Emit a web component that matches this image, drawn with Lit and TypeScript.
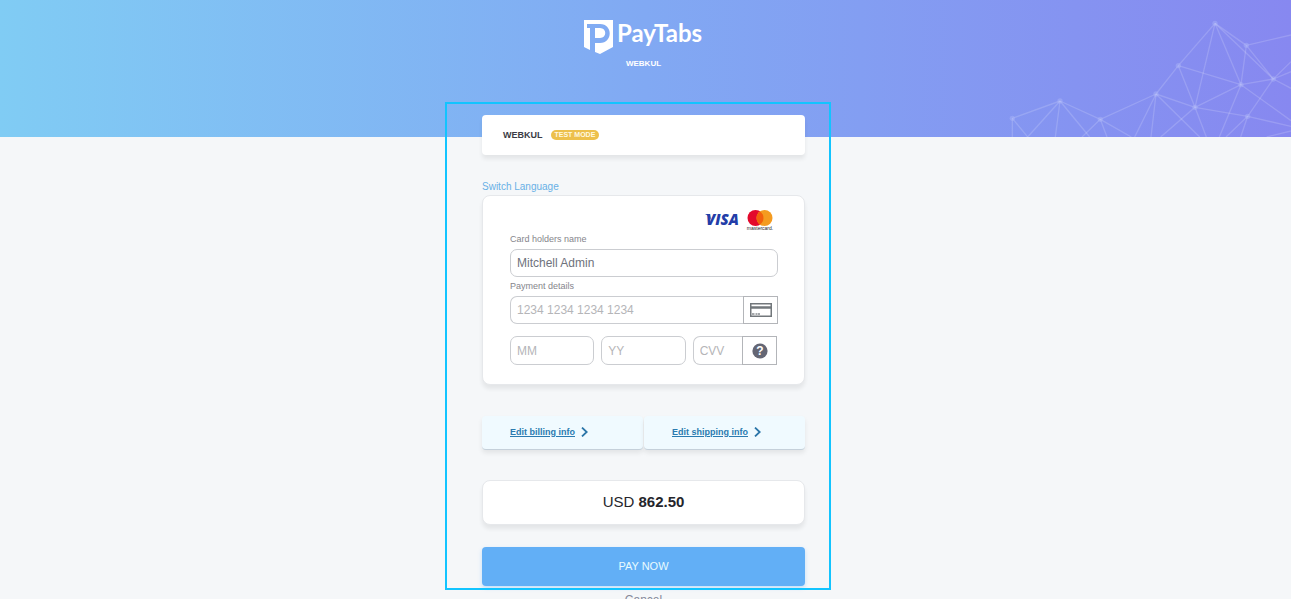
import { LitElement, html, css, svg } from "lit";
import { customElement, property } from "lit/decorators.js";

type Point = [number, number];

const NODES: Point[] = [
  [67, 355], [210, 303], [331, 358], [498, 282], [565, 197], [675, 70],
  [769, 136], [850, 237], [753, 254], [615, 322], [773, 349],
];

const EDGES: [Point, Point][] = [
  [[67, 355], [210, 303]], [[67, 355], [67, 411]], [[67, 355], [113, 411]],
  [[210, 303], [331, 358]], [[210, 303], [113, 411]], [[210, 303], [196, 411]],
  [[210, 303], [299, 411]], [[331, 358], [276, 411]], [[331, 358], [351, 411]],
  [[331, 358], [424, 411]], [[331, 358], [498, 282]], [[498, 282], [434, 411]],
  [[498, 282], [483, 411]], [[498, 282], [629, 411]], [[498, 282], [615, 322]],
  [[498, 282], [565, 197]], [[565, 197], [675, 70]], [[565, 197], [615, 322]],
  [[565, 197], [753, 254]], [[675, 70], [615, 322]], [[675, 70], [753, 254]],
  [[675, 70], [769, 136]], [[675, 70], [850, 237]], [[769, 136], [850, 237]],
  [[769, 136], [753, 254]], [[769, 136], [903, 105]], [[753, 254], [850, 237]],
  [[753, 254], [615, 322]], [[753, 254], [903, 362]], [[753, 254], [688, 411]],
  [[615, 322], [512, 411]], [[615, 322], [773, 349]], [[615, 322], [649, 411]],
  [[850, 237], [903, 185]], [[850, 237], [903, 215]], [[850, 237], [903, 265]],
  [[850, 237], [773, 349]], [[773, 349], [903, 379]], [[773, 349], [708, 411]],
  [[773, 349], [752, 411]], [[830, 411], [903, 393]],
];

@customElement("pay-banner")
export class PayBanner extends LitElement {
  static styles = css`
    :host {
      display: flex;
      justify-content: flex-end;
      height: 137px;
      overflow: hidden;
      background: linear-gradient(90deg, #80ccf4, #81a9f3 50%, #8788f0);
    }
    .mesh {
      width: 301px;
      height: 137px;
      flex: none;
    }
  `;
  render() {
    return html`<svg class="mesh" viewBox="0 0 903 411" aria-hidden="true">
      <g stroke="#fff" stroke-opacity=".16" stroke-width="4">
        ${EDGES.map(([a, b]) => svg`<line x1=${a[0]} y1=${a[1]} x2=${b[0]} y2=${b[1]}></line>`)}
      </g>
      <g fill="#b0b8fa" fill-opacity=".4">
        ${NODES.map(([x, y]) => svg`<circle cx=${x} cy=${y} r="8"></circle>`)}
      </g>
    </svg>`;
  }
}

@customElement("edit-link")
export class EditLink extends LitElement {
  @property() label = "";
  static styles = css`
    :host {
      display: flex;
      align-items: center;
      gap: 6px;
      height: 34px;
      padding: 0 0 2px 28px;
      box-sizing: border-box;
      background: #f0faff;
      border-bottom: 1px solid #c5d0da;
      border-radius: 4px;
      box-shadow: 0 3px 5px rgba(0, 0, 0, 0.08);
    }
    .link {
      font-size: 9px;
      font-weight: 700;
      line-height: 12px;
      color: #2b7bb0;
    }
    .chevron {
      width: 7px;
      height: 10px;
    }
  `;
  render() {
    return html`<a class="link" href="#">${this.label}</a>
      <svg class="chevron" viewBox="0 0 7 10" fill="none" stroke="#2b75a8" stroke-width="1.8" aria-hidden="true">
        <path d="M1 .6 5.700 5 1 9.400"></path>
      </svg>`;
  }
}

@customElement("app-root")
export class AppRoot extends LitElement {
  static styles = css`
    :host {
      display: grid;
      grid-template: auto / minmax(0, 1fr);
      align-items: start;
      height: 100vh;
      overflow-y: auto;
      scrollbar-width: none;
      background: #f5f7f9;
      font-family: "Liberation Sans", Arial, sans-serif;
    }
    * {
      box-sizing: border-box;
    }
    .banner,
    .content {
      grid-area: 1 / 1;
    }
    .content {
      z-index: 1;
      display: flex;
      flex-direction: column;
      align-items: center;
      padding: 19px 20px 19px 16px;
    }
    .logo {
      width: 120px;
      height: 36px;
    }
    .logo-text {
      font-family: Lato, sans-serif;
      font-size: 24px;
      font-weight: 700;
    }
    .merchant {
      margin: 3px 0 46px;
      font-size: 8px;
      line-height: 11px;
      font-weight: 700;
      color: #fff;
    }
    .checkout {
      position: relative;
      width: 100%;
      max-width: 323px;
      display: flex;
      flex-direction: column;
    }
    .focus-frame {
      position: absolute;
      inset: -13px -26px -4px -37px;
      border: 2px solid #12c4ff;
      pointer-events: none;
    }
    .panel {
      background: #fff;
      border: 1px solid #e6e8eb;
      border-radius: 8px;
      box-shadow: 0 4px 4px rgba(0, 0, 0, 0.07);
    }
    .shop {
      display: flex;
      align-items: center;
      gap: 8px;
      height: 40px;
      padding: 0 21px;
      border: 0;
      border-radius: 4px;
      font-size: 9px;
      font-weight: 700;
      color: #3b3b45;
    }
    .badge {
      padding: 0 4px;
      border-radius: 5px;
      background: #edc04c;
      color: #fff9e0;
      font-size: 7px;
      line-height: 10px;
    }
    .language {
      align-self: flex-start;
      margin-top: 26px;
      font-size: 10px;
      line-height: 12px;
      color: #68b0e6;
      text-decoration: none;
    }
    .card {
      margin-top: 2px;
      padding: 12px 26px 19px 27px;
      display: flex;
      flex-direction: column;
    }
    .brands {
      display: flex;
      justify-content: flex-end;
      gap: 7px;
      height: 25px;
      padding-right: 4px;
    }
    .visa {
      width: 34px;
      height: 25px;
    }
    .visa-text {
      font-family: "Open Sans", sans-serif;
      font-size: 15px;
      font-weight: 800;
      font-style: italic;
    }
    .mastercard {
      width: 28px;
      height: 25px;
    }
    .mastercard-text {
      font-family: "Liberation Sans", sans-serif;
      font-size: 5px;
    }
    .label {
      font-size: 9px;
      line-height: 12px;
      color: #85858c;
    }
    .label.first {
      margin-bottom: 4px;
    }
    .label.second {
      margin: 3px 0 4px;
    }
    .field {
      width: 100%;
      min-width: 0;
      height: 28px;
      padding: 0 6px;
      border: 1px solid #cbcdd1;
      border-radius: 7px;
      background: #fff;
      font-family: inherit;
      font-size: 12px;
      color: #6e727c;
      outline: none;
    }
    .field::placeholder {
      color: #b5b5b8;
      opacity: 1;
    }
    .group {
      display: flex;
    }
    .group .field {
      border-right: 0;
      border-radius: 7px 0 0 7px;
    }
    .addon {
      flex: none;
      display: flex;
      align-items: center;
      justify-content: center;
      width: 35px;
      height: 28px;
      padding: 0;
      border: 1px solid #b3b5b9;
      background: #fff;
    }
    .card-icon {
      width: 22px;
      height: 14px;
    }
    .help-icon {
      width: 16px;
      height: 16px;
    }
    .help-text {
      font-family: "Liberation Sans", sans-serif;
      font-size: 12px;
      font-weight: 700;
    }
    .expiry {
      display: grid;
      grid-template-columns: repeat(3, minmax(0, 1fr));
      gap: 7px;
      margin: 12px 1px 0 0;
    }
    .expiry .field,
    .expiry .addon {
      height: 29px;
    }
    .links {
      display: grid;
      grid-template-columns: repeat(2, minmax(0, 1fr));
      gap: 1px;
      margin-top: 31px;
    }
    .amount {
      margin: 30px 0 22px;
      padding: 11px 12px 13px;
      font-size: 15px;
      line-height: 19px;
      text-align: center;
      color: #25252b;
    }
    .pay {
      height: 39px;
      padding: 0 0 2px;
      border: 0;
      border-radius: 4px;
      background: #62aff6;
      box-shadow: 0 2px 4px rgba(98, 175, 246, 0.35);
      font-family: inherit;
      font-size: 11px;
      color: #e8fbff;
    }
    .cancel {
      margin-top: 7px;
      font-size: 12px;
      line-height: 14px;
      color: #85899a;
      text-decoration: none;
    }
  `;

  render() {
    return html`
      <pay-banner class="banner"></pay-banner>
      <main class="content">
        <svg class="logo" viewBox="0 0 120 36" role="img" aria-label="PayTabs">
          <path fill="#fff" fill-rule="evenodd" d="M0 1H29V28L16 35 11 33V24H16C29 24 29 5 16 5H3V9H6V31L0 28ZM11 9H16C23 9 23 19 16 19H11Z"></path>
          <text class="logo-text" x="33" y="23" fill="#fff">PayTabs</text>
        </svg>
        <div class="merchant">WEBKUL</div>
        <form class="checkout" @submit=${(e: Event) => e.preventDefault()}>
          <div class="panel shop">WEBKUL <span class="badge">TEST MODE</span></div>
          <a class="language" href="#">Switch Language</a>
          <section class="panel card">
            <div class="brands">
              <svg class="visa" viewBox="0 0 34 25" role="img" aria-label="Visa">
                <path fill="#233da8" d="M0 6H5L6 12Q4 7.500 0 6Z"></path>
                <text class="visa-text" x="1" y="17" fill="#233da8">VISA</text>
              </svg>
              <svg class="mastercard" viewBox="0 0 28 25" role="img" aria-label="Mastercard">
                <circle cx="9.500" cy="10" r="8" fill="#e3092c"></circle>
                <circle cx="18.500" cy="10" r="8" fill="#f49b20"></circle>
                <path d="M14 3.400A8 8 0 0 1 14 16.600 8 8 0 0 1 14 3.400Z" fill="#f2600d"></path>
                <text class="mastercard-text" x="14" y="22" text-anchor="middle" fill="#26262b">mastercard.</text>
              </svg>
            </div>
            <label class="label first" for="holder">Card holders name</label>
            <input class="field" id="holder" .value=${"Mitchell Admin"} />
            <label class="label second" for="number">Payment details</label>
            <div class="group">
              <input class="field" id="number" placeholder="1234 1234 1234 1234" />
              <span class="addon">
                <svg class="card-icon" viewBox="0 0 22 14" aria-hidden="true">
                  <rect x=".75" y=".75" width="20.500" height="12.500" fill="#fff" stroke="#72777b" stroke-width="1.500"></rect>
                  <path d="M1 4.500H21" stroke="#72777b" stroke-width="2.500"></path>
                  <path d="M2 11H4.500M5.500 11H7M7.500 11H10" stroke="#888c90" stroke-width="1.500"></path>
                </svg>
              </span>
            </div>
            <div class="expiry">
              <input class="field" placeholder="MM" aria-label="Expiry month" />
              <input class="field" placeholder="YY" aria-label="Expiry year" />
              <div class="group">
                <input class="field" placeholder="CVV" aria-label="CVV" />
                <button class="addon" type="button" aria-label="About the CVV">
                  <svg class="help-icon" viewBox="0 0 16 16" aria-hidden="true">
                    <circle cx="8" cy="8" r="7.600" fill="#646674"></circle>
                    <text class="help-text" x="8" y="12" text-anchor="middle" fill="#fff">?</text>
                  </svg>
                </button>
              </div>
            </div>
          </section>
          <nav class="links">
            <edit-link label="Edit billing info"></edit-link>
            <edit-link label="Edit shipping info"></edit-link>
          </nav>
          <div class="panel amount">USD <strong>862.50</strong></div>
          <button class="pay" type="submit">PAY NOW</button>
          <div class="focus-frame"></div>
        </form>
        <a class="cancel" href="#">Cancel</a>
      </main>
    `;
  }
}
